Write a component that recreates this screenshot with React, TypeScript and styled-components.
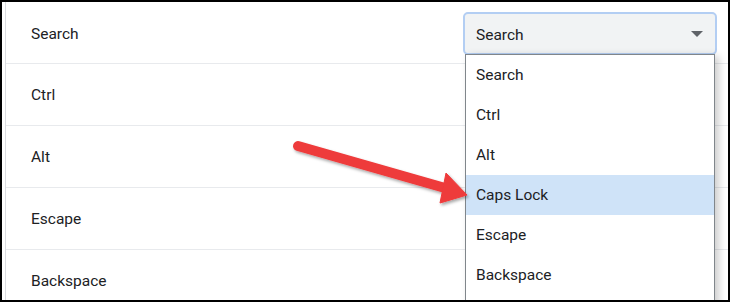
import React from "react";
import styled, { createGlobalStyle } from "styled-components";

const keys = ["Search", "Ctrl", "Alt", "Escape", "Backspace"];
const options = ["Search", "Ctrl", "Alt", "Caps Lock", "Escape", "Backspace"];

const GlobalStyle = createGlobalStyle`
  body {
    margin: 0;
    background: #fff;
    font-family: Roboto, "Liberation Sans", sans-serif;
  }
`;

const Frame = styled.div`
  position: relative;
  width: 730px;
  height: 302px;
  box-sizing: border-box;
  border: 2px solid #000;
  padding-left: 3px;
  background: #fff;
  overflow: hidden;
`;

const Panel = styled.div`
  height: 100%;
  border-left: 1px solid #dadce0;
`;

const Row = styled.div`
  display: flex;
  align-items: center;
  justify-content: space-between;
  height: 61px;
  padding: 0 11px 0 25px;
  border-bottom: 1px solid #e8eaed;
  color: #202124;
  font-size: 15.5px;
`;

const Label = styled.span<{ $first?: boolean }>`
  padding-top: ${(p) => (p.$first ? "3px" : "1px")};
`;

const SelectWrap = styled.div`
  position: relative;
  width: 254px;
  margin-top: 2px;
`;

const SelectBox = styled.div`
  display: flex;
  align-items: center;
  justify-content: space-between;
  height: 43px;
  box-sizing: border-box;
  padding: 2px 12px 0 11px;
  border: 2px solid #b3cef3;
  border-radius: 5px;
  background: #f1f3f4;
  color: #202124;
  font-size: 15.5px;
`;

const Caret = styled.span`
  width: 0;
  height: 0;
  margin-top: -2px;
  border-left: 6px solid transparent;
  border-right: 6px solid transparent;
  border-top: 6px solid #5f6368;
`;

const Menu = styled.ul`
  position: absolute;
  top: 42px;
  left: 2px;
  right: 2px;
  height: 260px;
  margin: 0;
  padding: 0;
  list-style: none;
  background: #fff;
  border: 1px solid #80868b;
  box-shadow: 4px 2px 8px rgba(0, 0, 0, 0.2);
  z-index: 2;
`;

const Item = styled.li<{ $active?: boolean }>`
  display: flex;
  align-items: center;
  height: 40px;
  padding-left: 10px;
  font-size: 15.5px;
  color: #202124;
  background: ${(p) => (p.$active ? "#cfe3f8" : "#fff")};
`;

const Pointer = styled.svg`
  position: absolute;
  top: -2px;
  left: -2px;
  width: 730px;
  height: 302px;
  pointer-events: none;
  z-index: 3;
`;

function Arrow() {
  return (
    <Pointer viewBox="0 0 730 302">
      <defs>
        <filter id="shadow" x="-10%" y="-30%" width="130%" height="170%">
          <feDropShadow dx="1.5" dy="2" stdDeviation="1.6" floodColor="#000" floodOpacity="0.35" />
        </filter>
      </defs>
      <g filter="url(#shadow)" fill="#ee3a3b" stroke="#ee3a3b">
        <line x1="298" y1="146" x2="445" y2="188" strokeWidth="10" strokeLinecap="round" />
        <polygon points="446,173 467,195 440,203" strokeWidth="1" strokeLinejoin="round" />
      </g>
    </Pointer>
  );
}

export default function App() {
  return (
    <>
      <GlobalStyle />
      <Frame>
        <Panel>
          {keys.map((k, i) => (
            <Row key={k}>
              <Label $first={i === 0}>{k}</Label>
              {i === 0 && (
                <SelectWrap>
                  <SelectBox>
                    <span>Search</span>
                    <Caret />
                  </SelectBox>
                  <Menu>
                    {options.map((o) => (
                      <Item key={o} $active={o === "Caps Lock"}>
                        {o}
                      </Item>
                    ))}
                  </Menu>
                </SelectWrap>
              )}
            </Row>
          ))}
        </Panel>
        <Arrow />
      </Frame>
    </>
  );
}
